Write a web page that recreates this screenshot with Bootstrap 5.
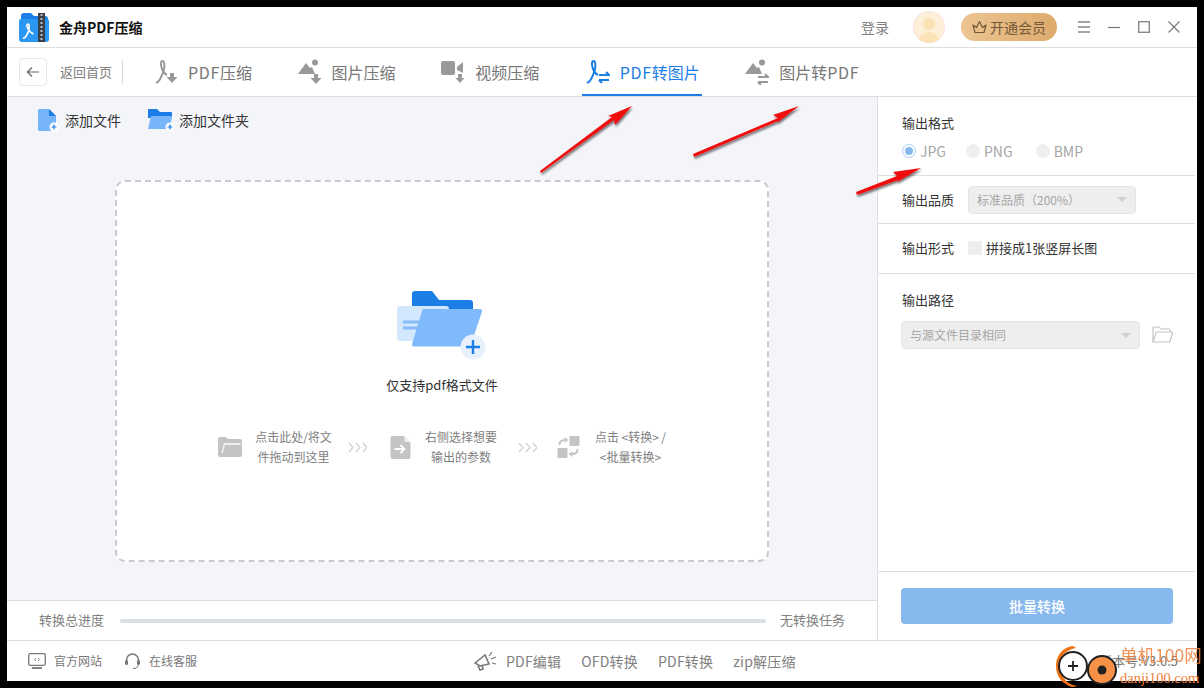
<!DOCTYPE html>
<html lang="zh-CN">
<head>
    <meta charset="UTF-8">
    <meta name="viewport" content="width=device-width, initial-scale=1.0">
    <title>金舟PDF压缩</title>
    <link href="https://cdn.jsdelivr.net/npm/bootstrap@5.3.0/dist/css/bootstrap.min.css" rel="stylesheet">
    <style>
        html, body { height: 100%; }
        body {
            font-family: "Noto Sans CJK SC", "Liberation Sans", sans-serif;
            background-color: #000;
            font-size: 13px;
            color: #333;
            overflow: hidden;
        }
        .app-frame { position: relative; height: 688px; padding: 7px 7px 7px 7px; }
        .app-window { height: 674px; background: #fff; }
        .title-bar { height: 41px; border-bottom: 1px solid #dedede; padding: 0 17px 0 12px; }
        .app-name { font-weight: 700; font-size: 14px; color: #111; margin-left: 10px; }
        .login-link { color: #808080; font-size: 14px; margin-right: 24px; }
        .avatar-round { width: 32px; height: 32px; border-radius: 50%; background: #fdf0d8; margin-right: 16px; overflow: hidden; box-shadow: inset 0 0 0 1px #fbe4e4; }
        .vip-btn { width: 96px; height: 28px; border-radius: 14px; background: linear-gradient(90deg, #ecc592, #deaa6c); color: #74583a; font-size: 14px; margin-right: 21px; gap: 3px; }
        .win-controls { gap: 18px; }
        .tab-bar { height: 49px; border-bottom: 1px solid #dedede; padding-left: 12px; }
        .back-btn { width: 28px; height: 28px; border: 1px solid #e8e8e8; border-radius: 4px; margin-right: 13px; }
        .back-text { color: #808080; padding-right: 10px; border-right: 1px solid #d8d8d8; line-height: 24px; margin-right: 27px; }
        .tab-row { gap: 40.500px; align-self: stretch; }
        .tab-item { padding: 2px 2px 0 3px; gap: 10px; font-size: 16px; color: #777; height: 48px; border-bottom: 2px solid transparent; margin-bottom: -1px; }
        .tab-item.on { color: #1b7de6; border-bottom-color: #1b7de6; }
        .wide-latin { letter-spacing: .7px; }
        .body-row { height: 543px; }
        .left-col { width: 870px; background: #f3f5f9; }
        .tool-row { height: 83px; padding: 11px 0 0 30px; gap: 27px; align-items: flex-start !important; color: #333; font-size: 14px; }
        .tool-item { gap: 5px; }
        .drop-zone { width: 654px; height: 382px; margin: 0 auto; background: #fff; border: 2px dashed #c9c9d1; border-radius: 10px; padding-top: 108px; }
        .drop-title { margin-top: 16px; color: #333; line-height: 18px; }
        .hint-row { margin-top: 33px; gap: 0; color: #808080; font-size: 12px; line-height: 20px; }
        .hint-text { white-space: nowrap; }
        .hint-one { width: 79px; margin-left: 12px; }
        .hint-two { width: 72px; margin-left: 14px; }
        .hint-three { width: 71px; margin-left: 15px; }
        .hint-arrow-a { width: 57px; padding-left: 15px; }
        .hint-arrow-b { width: 60px; padding-left: 21px; }
        .progress-row { height: 40px; margin-top: 38px; background: #fff; border-top: 1px solid #dedede; padding: 0 32px 2px; color: #808080; }
        .bar-track { flex: 1; height: 4px; border-radius: 2px; background: #d9dfe3; margin: 2px 14px 0 16px; }
        .right-col { width: 320px; border-left: 1px solid #dedede; }
        .set-block { padding: 0 24px; border-bottom: 1px solid #dedede; margin-right: 2px; }
        .set-label { color: #333; width: 66px; flex: none; }
        .fmt-row { height: 79px; padding-top: 17px; }
        .fmt-label { line-height: 18px; }
        .radio-row { margin-top: 9px; color: #a6a6a6; font-size: 14px; line-height: 20px; }
        .radio-dot { width: 14px; height: 14px; border-radius: 50%; background: #eee; margin-right: 4px; }
        .radio-dot.on { background: #fff; border: 1px solid #a9cdf5; }
        .radio-dot.on::after { content: ""; width: 8px; height: 8px; border-radius: 50%; background: #88b9ee; }
        .radio-opt { margin-right: 23px; }
        .radio-opt:first-child { margin-right: 20px; }
        .quality-row { height: 48px; }
        .form-row { height: 50px; padding-bottom: 2px; }
        .fake-select { height: 28px; background: #eee; border: 1px solid #e4e4e4; border-radius: 4px; color: #a6a6a6; font-size: 12px; padding: 0 8px; }
        .quality-select { width: 168px; }
        .path-select { width: 239px; }
        .caret-down { width: 0; height: 0; border-left: 5px solid transparent; border-right: 5px solid transparent; border-top: 5px solid #d0d0d0; }
        .check-box { width: 14px; height: 14px; background: #eee; border-radius: 2px; margin-right: 4px; }
        .path-block { height: 297px; padding: 17px 24px 0 23px; }
        .path-label { line-height: 18px; padding-left: 1px; margin-bottom: 12px; }
        .action-block { height: 69px; padding: 16px 24px 0 23px; border-top: 1px solid #dedede; margin-right: 2px; }
        .batch-btn { width: 272px; height: 36px; background: #88b9ee; border: 0; border-radius: 4px; color: #fff; font-size: 14px; font-weight: 500; }
        .foot-bar { height: 41px; border-top: 1px solid #dedede; padding: 0 19px 0 21px; color: #777; font-size: 12px; }
        .foot-item { gap: 8px; }
        .foot-site { margin-right: 22px; }
        .foot-links { margin-left: 277px; font-size: 14px; gap: 20px; color: #808080; letter-spacing: .2px; }
        .foot-horn { margin-right: -11px; }
        .version-text { margin-left: auto; color: #777; font-size: 13px; }
        .overlay-arrows { position: absolute; left: 0; top: 0; pointer-events: none; }
        .mark-badge { position: absolute; left: 1055px; top: 645px; width: 149px; height: 43px; pointer-events: none; }
        .mark-cn { position: absolute; left: 65px; top: -2px; color: #f0803c; font-size: 17.500px; line-height: 24px; opacity: .85; white-space: nowrap; font-family: "Noto Sans CJK SC", serif; }
        .mark-en { position: absolute; left: 65px; top: 24px; color: #f0803c; font-size: 14.500px; line-height: 18px; white-space: nowrap; font-family: "Liberation Serif", serif; }
    </style>
</head>
<body>
<div class="app-frame">
    <div class="app-window d-flex flex-column">
        <!-- title bar -->
        <div class="title-bar d-flex align-items-center">
            <svg width="30" height="30" viewBox="0 0 30 30"><path d="M2 4a3 3 0 0 1 3-3h7l3 3h11a3 3 0 0 1 3 3v2H2z" fill="#1b7de6"/><path d="M0 9a2 2 0 0 1 2-2h26a2 2 0 0 1 2 2v18a3 3 0 0 1-3 3H3a3 3 0 0 1-3-3z" fill="#2a97f2"/><rect x="19" y="1" width="7" height="29" fill="#3a4048"/><path d="M22.500 2v26" stroke="#b9c0c8" stroke-width="2" stroke-dasharray="2 2"/><path d="M4 26c2 1 5-4 6-9 .5-3 .2-5-1-5s-1.500 2-.5 4c1.500 3 3.500 5 6 6" fill="none" stroke="#fff" stroke-width="1.600"/></svg>
            <span class="app-name">金舟PDF压缩</span>
            <div class="ms-auto d-flex align-items-center">
                <span class="login-link">登录</span>
                <div class="avatar-round d-flex justify-content-center">
                    <svg width="32" height="32" viewBox="0 0 32 32"><circle cx="16" cy="13" r="6" fill="#fbe3b8"/><path d="M5 32c0-8 6-11 11-11s11 3 11 11z" fill="#fbe3b8"/></svg>
                </div>
                <div class="vip-btn d-flex align-items-center justify-content-center">
                    <svg width="15" height="14" viewBox="0 0 15 14"><path d="M3 12.500h9l2-7.500-3.500 2.500L7.500 1.500 4.500 7.500 1 5z" fill="none" stroke="#74583a" stroke-width="1.200" stroke-linejoin="round"/></svg>
                    <span>开通会员</span>
                </div>
                <div class="win-controls d-flex align-items-center">
                    <svg width="12" height="12" viewBox="0 0 12 12"><path d="M0 1h12M0 6h12M0 11h12" stroke="#888" stroke-width="1.300"/></svg>
                    <svg width="12" height="12" viewBox="0 0 12 12"><path d="M0 6.500h12" stroke="#777" stroke-width="1.200"/></svg>
                    <svg width="12" height="12" viewBox="0 0 12 12"><rect x=".7" y=".7" width="10.600" height="10.600" fill="none" stroke="#888" stroke-width="1.400"/></svg>
                    <svg width="12" height="12" viewBox="0 0 12 12"><path d="M.5.500l11 11M11.500.500l-11 11" stroke="#777" stroke-width="1.100"/></svg>
                </div>
            </div>
        </div>

        <!-- tabs -->
        <div class="tab-bar d-flex align-items-center">
            <div class="back-btn d-flex align-items-center justify-content-center">
                <svg width="14" height="12" viewBox="0 0 14 12"><path d="M13 6H1.500M6 1.500L1.500 6 6 10.500" fill="none" stroke="#666" stroke-width="1.200"/></svg>
            </div>
            <span class="back-text">返回首页</span>
            <div class="tab-row d-flex">
                <div class="tab-item d-flex align-items-center">
                    <svg width="25" height="26" viewBox="0 0 25 26"><path d="M3 23c2 2 6-5 8-13 .8-3.500.4-8-1.500-8S7.500 6 9 10c1.500 3.500 3 5 5 6" fill="none" stroke="#999" stroke-width="2"/><path d="M17 14h4v4h3.500L19 24l-5.500-6H17z" fill="#999"/></svg>
                    <span><span class="wide-latin">PDF</span>压缩</span>
                </div>
                <div class="tab-item d-flex align-items-center">
                    <svg width="24" height="26" viewBox="0 0 24 26"><circle cx="17" cy="3.500" r="3" fill="#999"/><path d="M0 15L8 4l4 5 2-1 3 7z" fill="#999"/><path d="M16 15h4v4h3.500L18 25l-5.500-6H16z" fill="#999"/></svg>
                    <span>图片压缩</span>
                </div>
                <div class="tab-item d-flex align-items-center">
                    <svg width="24" height="24" viewBox="0 0 24 24"><rect x="0" y="1" width="14" height="14" rx="2" fill="#999"/><path d="M16 7l6-5v11l-6-3z" fill="#999"/><path d="M17 14h4v4h2.500L19 23l-4.500-5H17z" fill="#999"/></svg>
                    <span>视频压缩</span>
                </div>
                <div class="tab-item on d-flex align-items-center">
                    <svg width="25" height="26" viewBox="0 0 25 26"><path d="M2 23c2 2 6-5 8-13 .8-3.500.4-8-1.500-8S6.500 6 8 10c1.500 3.500 3 5 5 6" fill="none" stroke="#1b7de6" stroke-width="2"/><path d="M14 16h10l-3-3M14 21h10M14 21l3 3" fill="none" stroke="#1b7de6" stroke-width="2"/></svg>
                    <span><span class="wide-latin">PDF</span>转图片</span>
                </div>
                <div class="tab-item d-flex align-items-center">
                    <svg width="24" height="26" viewBox="0 0 24 26"><circle cx="17" cy="3.500" r="3" fill="#999"/><path d="M0 15L8 4l4 5 2-1 3 7z" fill="#999"/><path d="M13 18h10l-3-3M13 23h10M13 23l3 3" fill="none" stroke="#999" stroke-width="2"/></svg>
                    <span>图片转<span class="wide-latin">PDF</span></span>
                </div>
            </div>
        </div>

        <!-- main area -->
        <div class="body-row d-flex">
            <div class="left-col d-flex flex-column">
                <div class="tool-row d-flex align-items-center">
                    <div class="tool-item d-flex align-items-center">
                        <svg width="23" height="24" viewBox="0 0 23 24"><path d="M1 2a1 1 0 0 1 1-1h10l7 7v15H2a1 1 0 0 1-1-1z" fill="#78b4fa"/><path d="M12 1l7 7h-7z" fill="#1b7de6"/><circle cx="17" cy="19" r="4.500" fill="#fff"/><path d="M14.500 19h5M17 16.500v5" stroke="#1b7de6" stroke-width="1.200"/></svg>
                        <span>添加文件</span>
                    </div>
                    <div class="tool-item d-flex align-items-center">
                        <svg width="26" height="24" viewBox="0 0 26 24"><path d="M0 2a1 1 0 0 1 1-1h8l3 3h11a1 1 0 0 1 1 1v5H0z" fill="#1b7de6"/><path d="M3 8h21l-2 13H0z" fill="#78b4fa"/><circle cx="22" cy="19" r="4.500" fill="#fff"/><path d="M19.500 19h5M22 16.500v5" stroke="#1b7de6" stroke-width="1.200"/></svg>
                        <span>添加文件夹</span>
                    </div>
                </div>

                <div class="drop-zone d-flex flex-column align-items-center">
                    <svg width="90" height="70" viewBox="0 0 90 70"><path d="M15 4a3 3 0 0 1 3-3h17l7 9h31a3 3 0 0 1 3 3v25H15z" fill="#1b7de6"/><rect x="0" y="16" width="52" height="35" rx="3" fill="#d3e7fd"/><path d="M6 32h16M6 38h14" stroke="#88bcf8" stroke-width="3"/><path d="M25 21a2 2 0 0 1 2-2h56a2 2 0 0 1 2 2.500l-11 33a3 3 0 0 1-2 2H17a2 2 0 0 1-2-2.500z" fill="#80bafc"/><circle cx="76" cy="57" r="12.500" fill="#e7f0fb"/><path d="M69 57h14M76 50v14" stroke="#1b7de6" stroke-width="2.400"/></svg>
                    <div class="drop-title">仅支持pdf格式文件</div>
                    <div class="hint-row d-flex align-items-center">
                        <svg width="24" height="20" viewBox="0 0 24 20"><path d="M0 2a2 2 0 0 1 2-2h6l2 2h12a2 2 0 0 1 2 2v14a2 2 0 0 1-2 2H2a2 2 0 0 1-2-2z" fill="#c4c4c4"/><path d="M6 6h17l-1 2H7l-2 8H3z" fill="#eee"/></svg>
                        <div class="hint-text hint-one text-center">点击此处/将文<br>件拖动到这里</div>
                        <div class="hint-arrow-a d-flex">
                            <svg width="19" height="11" viewBox="0 0 19 11"><path d="M1 1l4 4.500L1 10M8 1l4 4.500L8 10M15 1l4 4.500L15 10" fill="none" stroke="#cfcfcf" stroke-width="1.200"/></svg>
                        </div>
                        <svg width="21" height="23" viewBox="0 0 20 23"><path d="M2 0h11l7 7v14a2 2 0 0 1-2 2H2a2 2 0 0 1-2-2V2a2 2 0 0 1 2-2z" fill="#c4c4c4"/><path d="M14 0l6 6h-6z" fill="#eee"/><path d="M4 13h9M10 9l4 4-4 4" fill="none" stroke="#fff" stroke-width="1.800"/></svg>
                        <div class="hint-text hint-two text-center">右侧选择想要<br>输出的参数</div>
                        <div class="hint-arrow-b d-flex">
                            <svg width="19" height="11" viewBox="0 0 19 11"><path d="M1 1l4 4.500L1 10M8 1l4 4.500L8 10M15 1l4 4.500L15 10" fill="none" stroke="#cfcfcf" stroke-width="1.200"/></svg>
                        </div>
                        <svg width="23" height="22" viewBox="0 0 22 22"><rect x="12" y="0" width="10" height="10" rx="1" fill="#c4c4c4"/><rect x="0" y="12" width="10" height="10" rx="1" fill="#c4c4c4"/><path d="M2 9c0-3 2-5 5-5" fill="none" stroke="#c4c4c4" stroke-width="2"/><path d="M7 1l4 3-4 3z" fill="#c4c4c4"/><path d="M20 13c0 3-2 5-5 5" fill="none" stroke="#c4c4c4" stroke-width="2"/><path d="M15 15l-4 3 4 3z" fill="#c4c4c4"/></svg>
                        <div class="hint-text hint-three text-center">点击&thinsp;&lt;转换&gt;&thinsp;/<br>&lt;批量转换&gt;</div>
                    </div>
                </div>

                <div class="progress-row d-flex align-items-center">
                    <span>转换总进度</span>
                    <div class="bar-track"></div>
                    <span>无转换任务</span>
                </div>
            </div>

            <div class="right-col d-flex flex-column">
                <div class="set-block fmt-row">
                    <div class="fmt-label">输出格式</div>
                    <div class="radio-row d-flex align-items-center">
                        <div class="radio-opt d-flex align-items-center"><span class="radio-dot on d-flex align-items-center justify-content-center"></span>JPG</div>
                        <div class="radio-opt d-flex align-items-center"><span class="radio-dot"></span>PNG</div>
                        <div class="radio-opt d-flex align-items-center"><span class="radio-dot"></span>BMP</div>
                    </div>
                </div>
                <div class="set-block quality-row d-flex align-items-center">
                    <span class="set-label">输出品质</span>
                    <div class="fake-select quality-select d-flex align-items-center justify-content-between">
                        <span>标准品质（200%）</span><span class="caret-down"></span>
                    </div>
                </div>
                <div class="set-block form-row d-flex align-items-center">
                    <span class="set-label">输出形式</span>
                    <span class="check-box"></span><span>拼接成1张竖屏长图</span>
                </div>
                <div class="path-block">
                    <div class="path-label">输出路径</div>
                    <div class="d-flex align-items-center">
                        <div class="fake-select path-select d-flex align-items-center justify-content-between">
                            <span>与源文件目录相同</span><span class="caret-down"></span>
                        </div>
                        <svg class="ms-auto" width="21" height="18" viewBox="0 0 21 18"><path d="M1 16V2a1 1 0 0 1 1-1h5l2 2h8a1 1 0 0 1 1 1v2M1 16l3-9a1 1 0 0 1 1-1h14.500a1 1 0 0 1 1 1.300l-2.500 8a1 1 0 0 1-1 .7z" fill="none" stroke="#c4c4c4" stroke-width="1.200"/></svg>
                    </div>
                </div>
                <div class="action-block">
                    <button type="button" class="batch-btn btn">批量转换</button>
                </div>
            </div>
        </div>

        <!-- footer -->
        <div class="foot-bar d-flex align-items-center">
            <div class="foot-item foot-site d-flex align-items-center">
                <svg width="18" height="16" viewBox="0 0 18 16"><rect x=".7" y=".7" width="16.600" height="11.600" rx="1.500" fill="none" stroke="#777" stroke-width="1.300"/><path d="M4 15h10" stroke="#777" stroke-width="1.800"/><path d="M8 5L6.500 6.500 8 8M10 5l1.500 1.500L10 8" fill="none" stroke="#777"/></svg>
                <span>官方网站</span>
            </div>
            <div class="foot-item d-flex align-items-center">
                <svg width="17" height="17" viewBox="0 0 17 17"><path d="M2.500 10V7a6 6 0 0 1 12 0v3" fill="none" stroke="#777" stroke-width="1.500"/><rect x="1" y="7" width="3" height="5" rx="1.500" fill="#777"/><rect x="13" y="7" width="3" height="5" rx="1.500" fill="#777"/><path d="M14 12c0 3-2 3.500-5 3.500" fill="none" stroke="#777"/></svg>
                <span>在线客服</span>
            </div>
            <div class="foot-links d-flex align-items-center">
                <svg class="foot-horn" width="23" height="20" viewBox="0 0 23 20"><path d="M1 12l10-8 4 9-9 2z" fill="none" stroke="#777" stroke-width="1.600"/><path d="M4 15l2 4 3-1-1-4" fill="none" stroke="#777" stroke-width="1.600"/><path d="M15 5l3-4M17 8l5-2M18 12l4 1" stroke="#777" stroke-width="1.200"/></svg>
                <span>PDF编辑</span>
                <span>OFD转换</span>
                <span>PDF转换</span>
                <span>zip解压缩</span>
            </div>
            <span class="version-text">版本号:V3.0.5</span>
        </div>
    </div>

    <!-- red annotation arrows -->
    <svg class="overlay-arrows" width="1204" height="688" viewBox="0 0 1204 688">
        <defs>
            <filter id="arrowShade" x="-20%" y="-20%" width="140%" height="140%"><feDropShadow dx="1" dy="2" stdDeviation="1.200" flood-color="#000" flood-opacity=".55"/></filter>
        </defs>
        <g fill="#f01010" filter="url(#arrowShade)">
            <path d="M540 171L612 117 608 116 632 106 615 125 614 120 541 173z"/>
            <path d="M693 154L778 118 773 115 799 106 778 122 777 121.500 694 157z"/>
            <path d="M856 192L897 176 893 172 921 168 897 182 898 180 857 195z"/>
        </g>
    </svg>

    <!-- site watermark -->
    <div class="mark-badge">
        <svg width="70" height="43" viewBox="0 0 70 43">
            <path d="M17 1C7 3 1 11 1 21c0 10 6 18 16 21 3 0 5-1 5-1-8-1-17-8-17-20S12 5 21 3c-1-1-2-2-4-2z" fill="#f07214"/>
            <circle cx="18" cy="21" r="14" fill="#fff" stroke="#222" stroke-width="2"/>
            <path d="M13 21h10M18 16v10" stroke="#222" stroke-width="1.800"/>
            <circle cx="47" cy="25" r="14" fill="#f79148" stroke="#222" stroke-width="2"/>
            <circle cx="47" cy="25" r="4.500" fill="#222"/>
        </svg>
        <span class="mark-cn">单机100网</span>
        <span class="mark-en">danji100.com</span>
    </div>
</div>
<script src="https://cdn.jsdelivr.net/npm/bootstrap@5.3.0/dist/js/bootstrap.bundle.min.js"></script>
</body>
</html>
